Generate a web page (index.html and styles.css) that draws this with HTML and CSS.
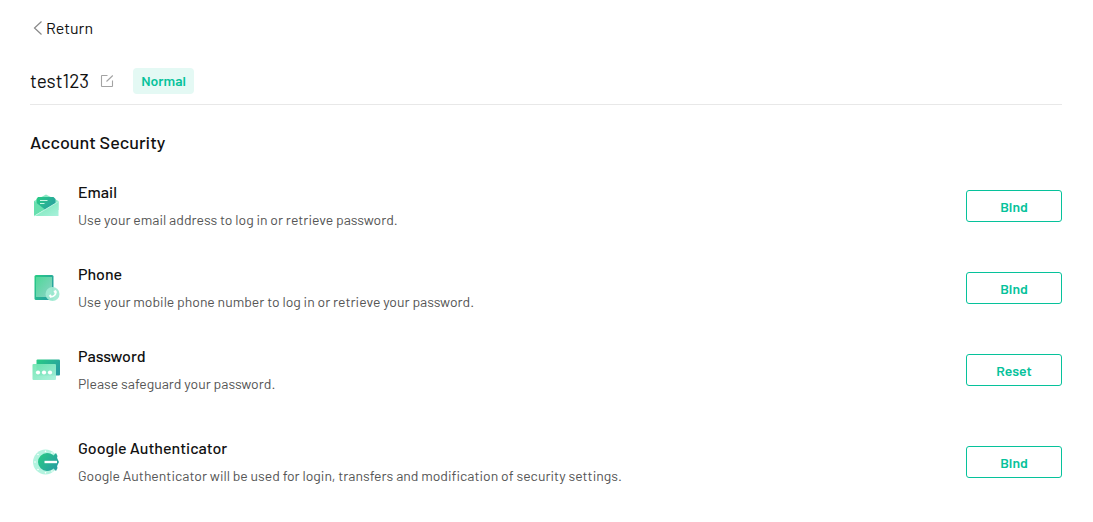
FILE: index.html
```html
<!DOCTYPE html>
<html lang="en">
<head>
  <meta charset="UTF-8" />
  <meta name="viewport" content="width=device-width, initial-scale=1.0"/>
  <title>Account Security</title>
  <link rel="stylesheet" href="styles.css">
</head>
<body>
  <header>
    <a class="return-link" href="#">
      <svg width="16" height="16" viewBox="0 0 16 16" aria-hidden="true">
        <path d="M11.5 1.5L4.5 8l7 6.5" fill="none" stroke="#888" stroke-width="1.2"/>
      </svg>
      Return
    </a>

    <div class="profile">
      <h1 class="username">test123</h1>
      <button class="edit-button" type="button" aria-label="Edit name">
        <svg width="14" height="14" viewBox="0 0 14 14" aria-hidden="true">
          <path d="M7.500 1.500H2a.5.5 0 0 0-.5.5v10a.5.5 0 0 0 .5.5h10a.5.5 0 0 0 .5-.5V6.500M6.500 7.500L12.800 1.500" fill="none" stroke="#a3a3a3" stroke-width="1.100"/>
        </svg>
      </button>
      <span class="status-tag">Normal</span>
    </div>
  </header>

  <main>
    <h2 class="section-title">Account Security</h2>

    <ul class="security-list">
      <li class="security-item">
        <svg class="item-icon" viewBox="0 0 32 32" aria-hidden="true">
          <defs>
            <linearGradient id="deep" x1="0" y1="0" x2="1" y2="0.6">
              <stop offset="0" stop-color="#28cd84"/>
              <stop offset="1" stop-color="#289fa0"/>
            </linearGradient>
            <linearGradient id="pale" x1="0" y1="0" x2="1" y2="1">
              <stop offset="0" stop-color="#6fe5b0"/>
              <stop offset="1" stop-color="#a9f1dc"/>
            </linearGradient>
            <linearGradient id="screen" x1="0" y1="0" x2="1" y2="1">
              <stop offset="0" stop-color="#4fd898"/>
              <stop offset="1" stop-color="#8bd3c6"/>
            </linearGradient>
          </defs>
          <path d="M4 11L16 4.500L28.500 11V20H4z" fill="#8ceac5"/>
          <path d="M8 7h15.500l2 2v7L14 21.500 6.500 16V9z" fill="url(#deep)"/>
          <path d="M10 10.500h7.500M10 13.500h4.500" stroke="#c5f6e2" stroke-width="1.2"/>
          <path d="M4 11l11 8.500L4 26z" fill="#67dfae"/>
          <path d="M4 26L28.500 11.500v14.500H4z" fill="url(#pale)"/>
          <path d="M4.500 26L28.500 11.500" stroke="#c9f8e8" stroke-width="0.8"/>
        </svg>
        <div class="item-text">
          <h3>Email</h3>
          <p>Use your email address to log in or retrieve password.</p>
        </div>
        <button class="action-button" type="button">Bind</button>
      </li>

      <li class="security-item">
        <svg class="item-icon" viewBox="0 0 32 32" aria-hidden="true">
          <rect x="4.500" y="3" width="19" height="25" rx="1.500" fill="url(#deep)"/>
          <rect x="6" y="5" width="16" height="20" fill="url(#screen)"/>
          <circle cx="22.500" cy="22" r="7" fill="#a0ead2" opacity="0.950"/>
          <path d="M25.500 19c1 3.500-1.500 6-5.500 6" fill="none" stroke="#fff" stroke-width="1.600"/>
          <path d="M23.500 19l2.400-1 1 2.500-2.100.9zM18.700 24l1.600-1.700 1.600 1.700-.9 1.700z" fill="#fff"/>
        </svg>
        <div class="item-text">
          <h3>Phone</h3>
          <p>Use your mobile phone number to log in or retrieve your password.</p>
        </div>
        <button class="action-button" type="button">Bind</button>
      </li>

      <li class="security-item">
        <svg class="item-icon" viewBox="0 0 32 32" aria-hidden="true">
          <rect x="6.500" y="5.500" width="23.500" height="16" rx="1" fill="url(#deep)"/>
          <rect x="2.500" y="10" width="23.500" height="16" rx="1" fill="url(#pale)" opacity="0.930"/>
          <g fill="#fff">
            <circle cx="8" cy="18.500" r="2.100"/>
            <circle cx="14" cy="18.500" r="2.100"/>
            <circle cx="20" cy="18.500" r="2.100"/>
          </g>
        </svg>
        <div class="item-text">
          <h3>Password</h3>
          <p>Please safeguard your password.</p>
        </div>
        <button class="action-button" type="button">Reset</button>
      </li>

      <li class="security-item security-item-spaced">
        <svg class="item-icon" viewBox="0 0 32 32" aria-hidden="true">
          <circle cx="15.500" cy="16" r="12.500" fill="#b4f3df"/>
          <path d="M17 7c3 0 5 1 6.500 2.500L26 7l1.500 3-.5 2 2 4-2 4 .5 2-1.500 3-2.500-2.500C22 24 20 25 17 25a9 9 0 0 1 0-18z" fill="url(#deep)"/>
          <path d="M14.500 16H27" stroke="#fff" stroke-width="2.400"/>
          <g fill="#fff">
            <circle cx="5" cy="16" r="0.800"/>
            <circle cx="8" cy="8.500" r="0.800"/>
            <circle cx="8" cy="23.500" r="0.800"/>
            <circle cx="15.500" cy="5.300" r="0.800"/>
            <circle cx="15.500" cy="26.700" r="0.800"/>
            <circle cx="22" cy="7" r="0.800"/>
            <circle cx="22" cy="25" r="0.800"/>
          </g>
        </svg>
        <div class="item-text">
          <h3>Google Authenticator</h3>
          <p>Google Authenticator will be used for login, transfers and modification of security settings.</p>
        </div>
        <button class="action-button" type="button">Bind</button>
      </li>
    </ul>
  </main>
</body>
</html>
```
FILE: styles.css
```css
* {
  box-sizing: border-box;
}

body {
  font-family: Barlow, Roboto, sans-serif;
  background-color: #ffffff;
  color: #111;
  margin: 0;
  padding: 16px 31px 16px 30px;
  font-size: 14px;
  line-height: 24px;
}

h1, h2, h3, p, ul {
  margin: 0;
  padding: 0;
}

button {
  font-family: inherit;
  cursor: pointer;
}

.return-link {
  display: flex;
  align-items: center;
  width: fit-content;
  color: #111;
  font-size: 16px;
  text-decoration: none;
}

.profile {
  display: flex;
  align-items: center;
  margin-top: 28px;
  padding-bottom: 10px;
  border-bottom: 1px solid #e8e8e8;
}

.username {
  font-size: 19px;
  font-weight: 400;
}

.edit-button {
  display: flex;
  margin: 0 19px 0 11px;
  padding: 0;
  border: none;
  background: none;
}

.status-tag {
  padding: 0 8px;
  border-radius: 4px;
  background-color: #e4f9f4;
  color: #06c29b;
  font-weight: 600;
  line-height: 26px;
}

.section-title {
  margin: 25px 0 26px;
  font-size: 18px;
  font-weight: 500;
}

.security-list {
  display: flex;
  flex-direction: column;
  gap: 30px;
  list-style: none;
}

.security-item {
  display: flex;
  align-items: center;
  gap: 16px;
}

.security-item-spaced {
  margin-top: 10px;
}

.item-icon {
  flex: none;
  width: 32px;
  height: 32px;
}

.item-text {
  flex: 1;
}

.item-text h3 {
  margin-bottom: 4px;
  font-size: 16px;
  font-weight: 500;
}

.item-text p {
  color: #555;
}

.action-button {
  flex: none;
  width: 96px;
  height: 32px;
  border: 1px solid #06c29b;
  border-radius: 3px;
  background-color: #fff;
  color: #06c29b;
  font-size: 14px;
  font-weight: 600;
}

.action-button:hover {
  background-color: #e4f9f4;
}
```
